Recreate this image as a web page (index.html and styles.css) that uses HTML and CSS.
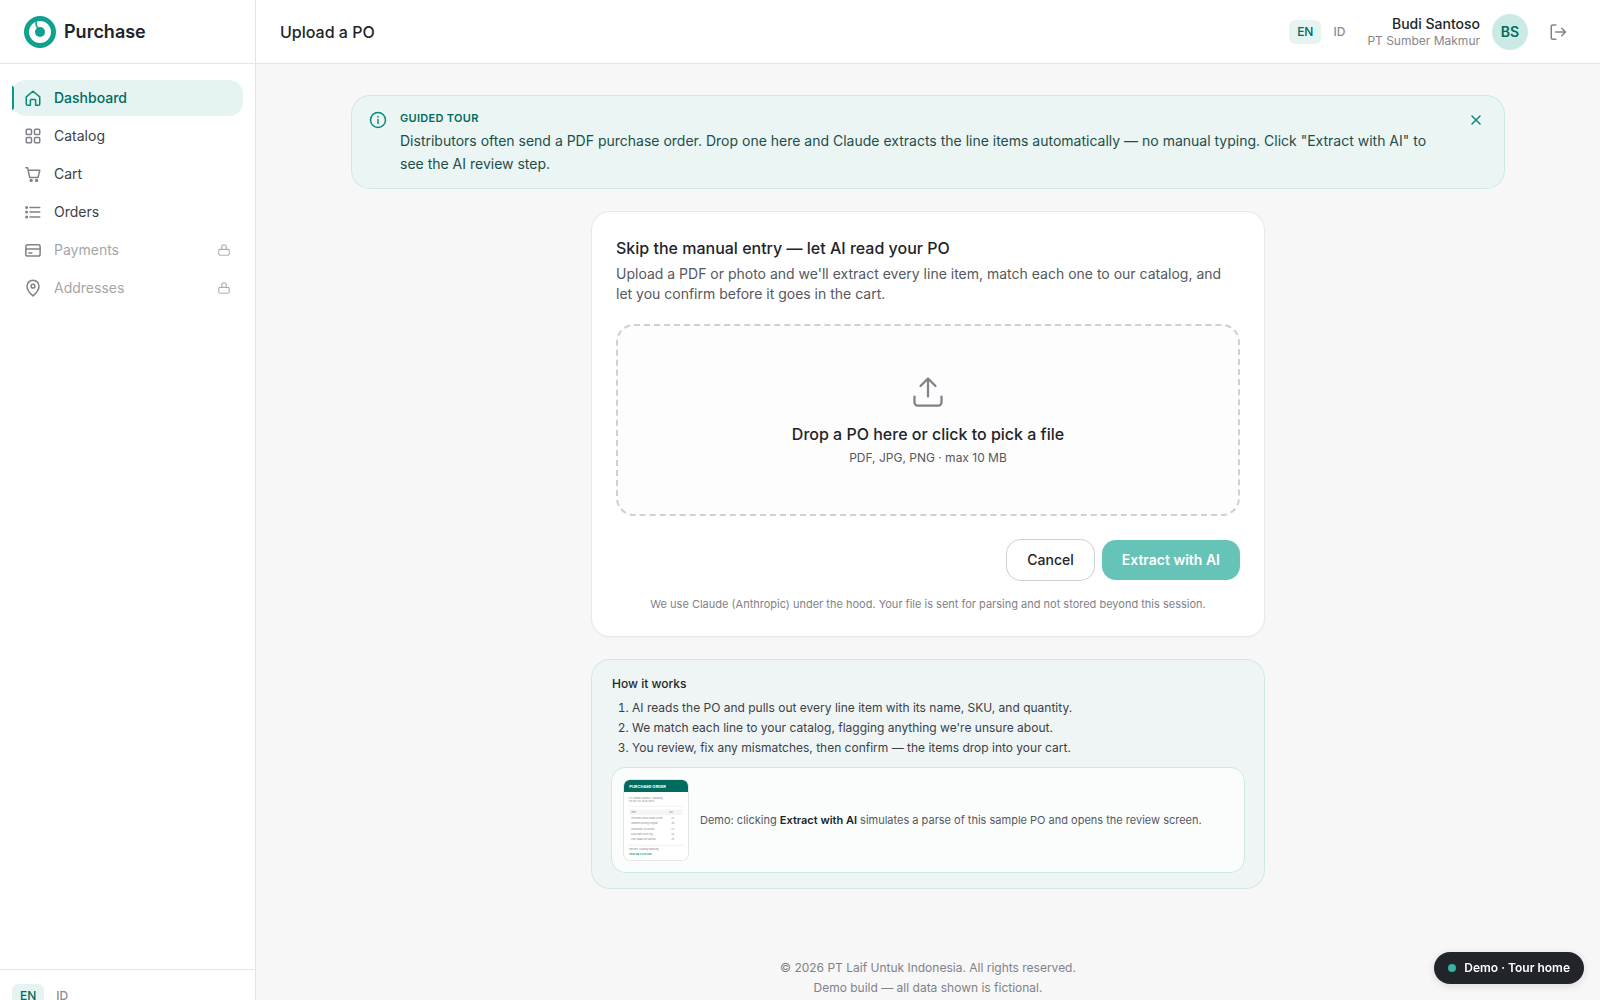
FILE: index.html
```html
<!DOCTYPE html>
<html lang="en">
<head>
    <meta charset="UTF-8">
    <meta name="viewport" content="width=device-width, initial-scale=1.0">
    <title>Upload a PO - Purchase</title>
    <link rel="stylesheet" href="styles.css">
</head>
<body>
    <div class="layout">
        <aside class="sidebar">
            <a href="#" class="brand">
                <svg class="brand-logo" viewBox="0 0 32 32" fill="none">
                    <circle cx="16" cy="16" r="13.5" stroke="#10a08e" stroke-width="5"/>
                    <circle cx="16" cy="16" r="5" fill="#10a08e"/>
                    <path d="M12.4 4.5C11.6 7.6 12 10 14.2 12.6" stroke="#10a08e" stroke-width="1.6"/>
                </svg>
                <span>Purchase</span>
            </a>
            <nav class="nav">
                <a href="#" class="nav-item active">
                    <svg class="icon" viewBox="0 0 24 24"><path d="M3 10.5 12 3l9 7.5V20a1.5 1.5 0 0 1-1.5 1.5h-4V15a1 1 0 0 0-1-1h-5a1 1 0 0 0-1 1v6.5h-4A1.5 1.5 0 0 1 3 20z"/></svg>
                    <span>Dashboard</span>
                </a>
                <a href="#" class="nav-item">
                    <svg class="icon" viewBox="0 0 24 24"><rect x="3" y="3" width="7" height="7" rx="1.5"/><rect x="14" y="3" width="7" height="7" rx="1.5"/><rect x="3" y="14" width="7" height="7" rx="1.5"/><rect x="14" y="14" width="7" height="7" rx="1.5"/></svg>
                    <span>Catalog</span>
                </a>
                <a href="#" class="nav-item">
                    <svg class="icon" viewBox="0 0 24 24"><path d="M2.5 3.5h2.3l2.7 13h11.3L21 7H5.6"/><circle cx="9.5" cy="20.5" r="1.3"/><circle cx="16.8" cy="20.5" r="1.3"/></svg>
                    <span>Cart</span>
                </a>
                <a href="#" class="nav-item">
                    <svg class="icon" viewBox="0 0 24 24"><path d="M8 6h13M8 12h13M8 18.5h13"/><circle cx="3.5" cy="6" r="1"/><circle cx="3.5" cy="12" r="1"/><circle cx="3.5" cy="18.5" r="1"/></svg>
                    <span>Orders</span>
                </a>
                <a href="#" class="nav-item locked">
                    <svg class="icon" viewBox="0 0 24 24"><rect x="2.5" y="5" width="19" height="15" rx="2.5"/><path d="M2.5 10.5h19M6.5 16h4"/></svg>
                    <span>Payments</span>
                    <svg class="lock" viewBox="0 0 24 24"><rect x="3" y="11" width="18" height="10" rx="2"/><path d="M8 11V7a4 4 0 0 1 8 0v4"/></svg>
                </a>
                <a href="#" class="nav-item locked">
                    <svg class="icon" viewBox="0 0 24 24"><path d="M12 22.5s8-7 8-13a8 8 0 1 0-16 0c0 6 8 13 8 13z"/><circle cx="12" cy="9.5" r="2.5"/></svg>
                    <span>Addresses</span>
                    <svg class="lock" viewBox="0 0 24 24"><rect x="3" y="11" width="18" height="10" rx="2"/><path d="M8 11V7a4 4 0 0 1 8 0v4"/></svg>
                </a>
            </nav>
            <div class="sidebar-footer">
                <div class="lang">
                    <button type="button" class="lang-btn selected">EN</button>
                    <button type="button" class="lang-btn">ID</button>
                </div>
            </div>
        </aside>

        <div class="page">
            <header class="topbar">
                <h1>Upload a PO</h1>
                <div class="lang">
                    <button type="button" class="lang-btn selected">EN</button>
                    <button type="button" class="lang-btn">ID</button>
                </div>
                <div class="user">
                    <div class="user-text">
                        <span class="user-name">Budi Santoso</span>
                        <span class="user-company">PT Sumber Makmur</span>
                    </div>
                    <span class="avatar">BS</span>
                    <button type="button" class="logout" aria-label="Log out">
                        <svg class="icon" viewBox="0 0 24 24"><path d="M9 2.5H5a2 2 0 0 0-2 2v15a2 2 0 0 0 2 2h4M9 12h13M17 7l5 5-5 5"/></svg>
                    </button>
                </div>
            </header>

            <main class="content">
                <section class="tour">
                    <svg class="tour-icon" viewBox="0 0 20 20"><circle cx="10" cy="10" r="7.5"/><path d="M10 9.5v4M10 6.5v.5"/></svg>
                    <div class="tour-text">
                        <h2>Guided tour</h2>
                        <p>Distributors often send a PDF purchase order. Drop one here and Claude extracts the line items automatically — no manual typing. Click "Extract with AI" to see the AI review step.</p>
                    </div>
                    <button type="button" class="tour-close" aria-label="Close">
                        <svg viewBox="0 0 16 16"><path d="M4 4l8 8M12 4l-8 8"/></svg>
                    </button>
                </section>

                <div class="column">
                    <form class="card">
                        <h2>Skip the manual entry — let AI read your PO</h2>
                        <p class="card-desc">Upload a PDF or photo and we'll extract every line item, match each one to our catalog, and let you confirm before it goes in the cart.</p>
                        <label class="dropzone" for="po-file">
                            <svg viewBox="0 0 24 24"><path d="M21 15v4a2 2 0 0 1-2 2H5a2 2 0 0 1-2-2v-4M17 8l-5-5-5 5M12 3v12"/></svg>
                            <span class="drop-title">Drop a PO here or click to pick a file</span>
                            <span class="drop-hint">PDF, JPG, PNG · max 10 MB</span>
                            <input type="file" id="po-file" accept=".pdf,.jpg,.png" hidden>
                        </label>
                        <div class="actions">
                            <button type="button" class="btn btn-outline">Cancel</button>
                            <button type="submit" class="btn btn-primary" disabled>Extract with AI</button>
                        </div>
                        <p class="note">We use Claude (Anthropic) under the hood. Your file is sent for parsing and not stored beyond this session.</p>
                    </form>

                    <section class="how">
                        <h3>How it works</h3>
                        <ol>
                            <li>AI reads the PO and pulls out every line item with its name, SKU, and quantity.</li>
                            <li>We match each line to your catalog, flagging anything we're unsure about.</li>
                            <li>You review, fix any mismatches, then confirm — the items drop into your cart.</li>
                        </ol>
                        <div class="sample">
                            <svg class="sample-po" viewBox="0 0 192 240">
                                <rect width="192" height="240" fill="#fff"/>
                                <rect width="192" height="36" fill="#006b5e"/>
                                <text x="16" y="23" class="po-title">PURCHASE ORDER</text>
                                <g class="po-text">
                                    <text x="15" y="57">PT Sumber Makmur · Bandung</text>
                                    <text x="15" y="66">PO No. PO-2026-0042</text>
                                    <text x="21" y="99">Item</text>
                                    <text x="136" y="99">Qty</text>
                                    <text x="21" y="117">Teh Botol Sosro Kotak 250ml</text>
                                    <text x="142" y="117">24</text>
                                    <text x="21" y="132">Indomie Goreng Original</text>
                                    <text x="142" y="132">40</text>
                                    <text x="21" y="150">Aqua Botol Air 600ml</text>
                                    <text x="142" y="150">24</text>
                                    <text x="21" y="165">Gula Pasir Putih 1kg</text>
                                    <text x="142" y="165">20</text>
                                    <text x="21" y="180">Kopi Kapal Api Special</text>
                                    <text x="142" y="180">30</text>
                                    <text x="15" y="210">Delivery: Gudang Bandung</text>
                                </g>
                                <path d="M15 79h162M15 196h162" stroke="#ececec" stroke-width="2"/>
                                <rect x="15" y="88" width="162" height="17" fill="#000" opacity=".04"/>
                                <text x="15" y="226" class="po-total">Total: Rp 4.250.000</text>
                            </svg>
                            <p>Demo: clicking <strong>Extract with AI</strong> simulates a parse of this sample PO and opens the review screen.</p>
                        </div>
                    </section>
                </div>
            </main>

            <footer class="footer">
                <p>© 2026 PT Laif Untuk Indonesia. All rights reserved.</p>
                <p>Demo build — all data shown is fictional.</p>
            </footer>
        </div>
    </div>

    <a href="#" class="demo-pill"><span class="dot"></span>Demo · Tour home</a>
</body>
</html>
```
FILE: styles.css
```css
* {
    box-sizing: border-box;
}
body {
    margin: 0;
    font-family: Inter, "Liberation Sans", sans-serif;
    font-size: 14px;
    line-height: 20px;
    color: #212529;
    background: #f7f7f7;
}
h1, h2, h3, p, ol {
    margin: 0;
}
a {
    color: inherit;
    text-decoration: none;
}
button {
    font: inherit;
    border: none;
    background: none;
    padding: 0;
    cursor: pointer;
}
svg {
    flex-shrink: 0;
    fill: none;
    stroke-linecap: round;
    stroke-linejoin: round;
}
.layout {
    display: flex;
    min-height: 100vh;
}

/* sidebar */
.sidebar {
    width: 256px;
    flex-shrink: 0;
    display: flex;
    flex-direction: column;
    background: #fff;
    border-right: 1px solid #e5e5e6;
}
.brand {
    display: flex;
    align-items: center;
    gap: 8px;
    height: 64px;
    padding: 0 24px;
    border-bottom: 1px solid #e5e5e6;
    font-size: 18px;
    font-weight: 600;
}
.brand-logo {
    width: 32px;
    height: 32px;
}
.nav {
    flex: 1;
    display: flex;
    flex-direction: column;
    gap: 2px;
    padding: 16px 12px;
}
.nav-item {
    position: relative;
    display: flex;
    align-items: center;
    gap: 12px;
    height: 36px;
    padding: 0 12px;
    border-radius: 14px;
    color: #3c4046;
}
.icon {
    width: 18px;
    height: 18px;
    stroke: #7f8288;
    stroke-width: 2;
}
.nav-item.active {
    background: #e5f4f2;
    color: #006b5e;
    font-weight: 500;
}
.nav-item.active .icon {
    stroke: #0b8a79;
}
.nav-item.active::before {
    content: "";
    position: absolute;
    left: 0;
    top: 6px;
    bottom: 6px;
    width: 2px;
    border-radius: 0 2px 2px 0;
    background: #0b9a87;
}
.nav-item.locked {
    color: #a5a6a9;
}
.lock {
    width: 14px;
    height: 14px;
    margin-left: auto;
    stroke: #afb0b3;
    stroke-width: 2;
}
.sidebar-footer {
    padding: 14px 12px;
    border-top: 1px solid #e5e5e6;
}
.lang {
    display: flex;
    gap: 4px;
}
.lang-btn {
    height: 24px;
    padding: 0 8px;
    border-radius: 6px;
    font-size: 12px;
    font-weight: 500;
    line-height: 16px;
    color: #8a8c91;
}
.lang-btn.selected {
    background: #e5f4f2;
    color: #006b5e;
}

/* header */
.page {
    flex: 1;
    min-width: 0;
    display: flex;
    flex-direction: column;
}
.topbar {
    display: flex;
    align-items: center;
    height: 64px;
    padding: 0 24px;
    background: #fff;
    border-bottom: 1px solid #e5e5e6;
}
.topbar h1 {
    margin-right: auto;
    font-size: 16px;
    font-weight: 500;
    line-height: 24px;
}
.user {
    display: flex;
    align-items: center;
    gap: 12px;
    margin-left: 14px;
}
.user-text {
    display: flex;
    flex-direction: column;
    text-align: right;
}
.user-name {
    font-weight: 500;
    line-height: 18px;
}
.user-company {
    font-size: 12px;
    line-height: 16px;
    color: #85878c;
}
.avatar {
    width: 36px;
    height: 36px;
    border-radius: 50%;
    background: #cbeae5;
    color: #006b5e;
    font-weight: 600;
    line-height: 36px;
    text-align: center;
}
.logout {
    display: flex;
    align-items: center;
    justify-content: center;
    width: 36px;
    height: 36px;
}

/* content */
.content {
    width: 100%;
    max-width: 1216px;
    margin: 0 auto;
    padding: 32px 32px 46px;
}
.tour {
    display: flex;
    align-items: flex-start;
    gap: 12px;
    padding: 14px 16px 13px;
    border-radius: 18px;
    background: #ebf5f4;
    box-shadow: 0 0 0 1px #cbeae5;
}
.tour-icon {
    width: 20px;
    height: 20px;
    stroke: #0b8a79;
    stroke-width: 1.5;
}
.tour-text {
    flex: 1;
}
.tour h2 {
    margin-bottom: 3px;
    font-size: 11px;
    font-weight: 600;
    line-height: 16px;
    text-transform: uppercase;
    letter-spacing: 0.3px;
    color: #006b5e;
}
.tour p {
    line-height: 23px;
    color: #1b4f4b;
}
.tour-close {
    display: flex;
    padding: 2px 4px;
    margin-left: 24px;
}
.tour-close svg {
    width: 16px;
    height: 16px;
    stroke: #0b8a79;
    stroke-width: 1.5;
}
.column {
    display: flex;
    flex-direction: column;
    gap: 24px;
    max-width: 672px;
    margin: 24px auto 0;
}
.card {
    padding: 24px;
    border-radius: 18px;
    background: #fff;
    box-shadow: 0 0 0 1px #e8e8e9, 0 1px 2px 1px rgba(0, 0, 0, 0.03);
}
.card h2 {
    margin-bottom: 4px;
    font-size: 16px;
    font-weight: 500;
    line-height: 24px;
}
.card-desc {
    color: #55585e;
}
.dropzone {
    display: flex;
    flex-direction: column;
    align-items: center;
    margin: 20px 0 24px;
    padding: 48px 24px;
    border: 2px dashed #d0d0d1;
    border-radius: 18px;
    background: #fdfdfd;
    cursor: pointer;
}
.dropzone svg {
    width: 36px;
    height: 36px;
    margin-bottom: 12px;
    stroke: #7f8288;
    stroke-width: 1.5;
}
.drop-title {
    margin-bottom: 4px;
    font-size: 16px;
    font-weight: 500;
    line-height: 24px;
}
.drop-hint {
    font-size: 12px;
    line-height: 16px;
    color: #55585e;
}
.actions {
    display: flex;
    justify-content: flex-end;
    gap: 8px;
}
.btn {
    height: 40px;
    padding: 0 20px;
    border-radius: 14px;
    font-weight: 500;
}
.btn-outline {
    background: #fff;
    color: #212529;
    box-shadow: 0 0 0 1px #d0d0d1;
}
.btn-primary {
    background: #66c3b7;
    color: #fff;
    font-weight: 600;
}
.note {
    margin-top: 16px;
    font-size: 11px;
    line-height: 16px;
    text-align: center;
    color: #7f8288;
}
.how {
    padding: 16px 20px;
    border-radius: 18px;
    background: #eff5f5;
    box-shadow: 0 0 0 1px #cbeae5;
    font-size: 12px;
    line-height: 16px;
}
.how h3 {
    font-size: 12px;
    font-weight: 500;
}
.how ol {
    display: flex;
    flex-direction: column;
    gap: 4px;
    margin: 8px 0 12px;
    padding-left: 20px;
    color: #3c4046;
}
.sample {
    display: flex;
    align-items: center;
    gap: 12px;
    padding: 12px;
    border-radius: 14px;
    background: #fbfdfd;
    box-shadow: 0 0 0 1px #cbeae5;
    font-size: 11px;
    color: #55585e;
}
.sample strong {
    font-weight: 600;
    color: #212529;
}
.sample-po {
    width: 64px;
    height: 80px;
    border-radius: 6px;
    box-shadow: 0 0 0 1px #e5e5e6;
}
.po-title {
    font-size: 12px;
    font-weight: 700;
    fill: #fff;
}
.po-text {
    font-size: 7px;
    fill: #85878c;
}
.po-total {
    font-size: 7px;
    font-weight: 700;
    fill: #0b9a87;
}

/* footer */
.footer {
    margin-top: auto;
    padding: 24px;
    font-size: 12px;
    text-align: center;
    color: #7f8288;
}
.demo-pill {
    position: fixed;
    right: 16px;
    bottom: 16px;
    display: flex;
    align-items: center;
    gap: 8px;
    height: 32px;
    padding: 0 14px;
    border-radius: 16px;
    background: #212529;
    color: #fff;
    font-size: 12px;
    font-weight: 600;
    box-shadow: 0 2px 8px rgba(0, 0, 0, 0.12);
}
.dot {
    width: 8px;
    height: 8px;
    border-radius: 50%;
    background: #34b3a1;
}
```
